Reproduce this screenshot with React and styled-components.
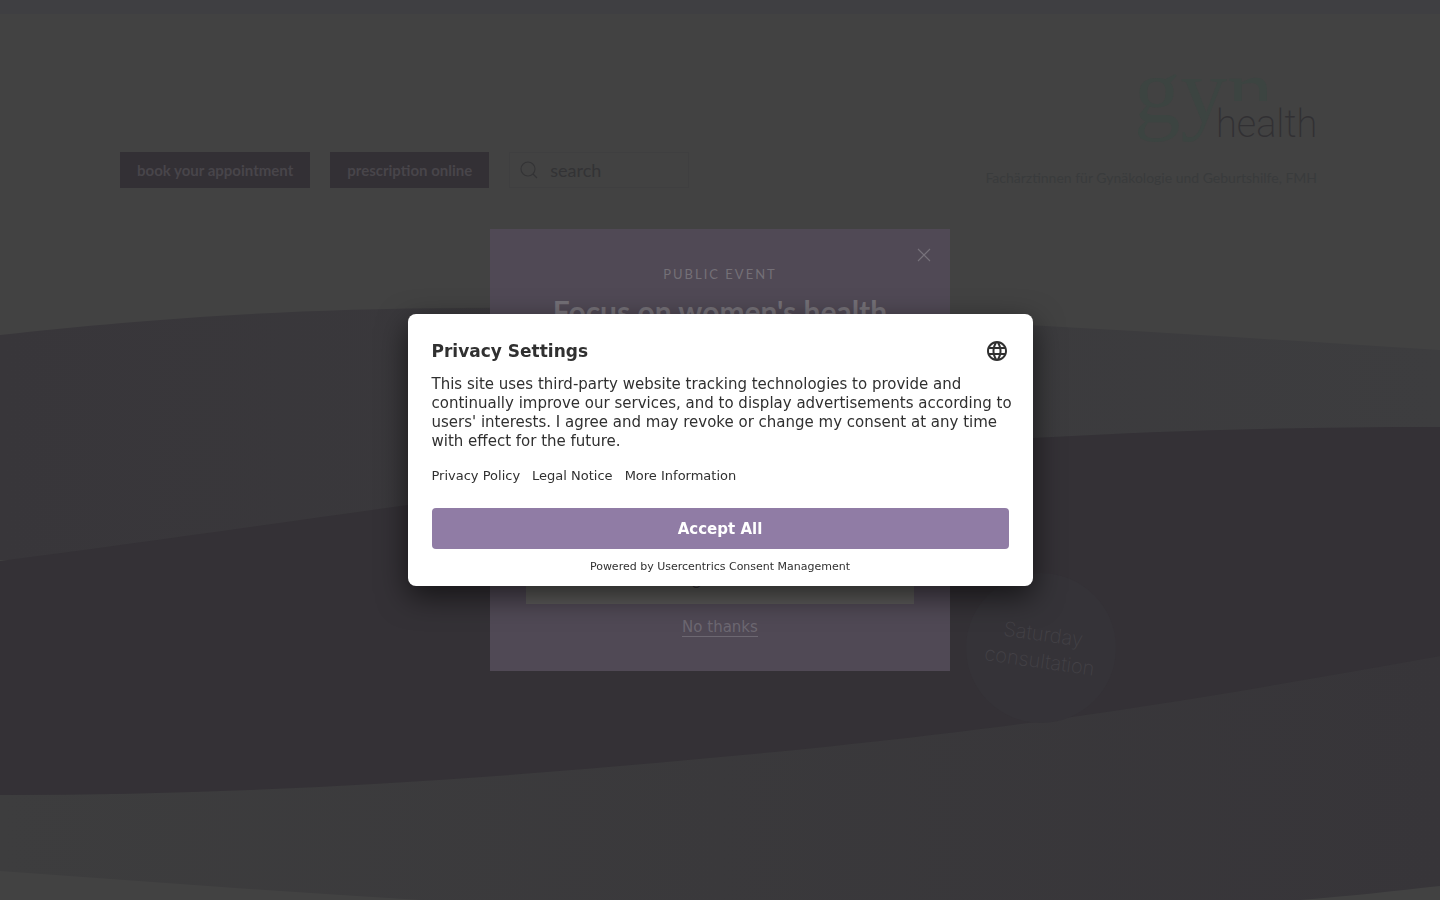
import React, { useState } from 'react';
import styled, { createGlobalStyle } from 'styled-components';
import { MdLanguage } from 'react-icons/md';

const GlobalStyle = createGlobalStyle`
    *{
        box-sizing:border-box;
    }
    body{
        margin:0;
        background:#424242;
        font-family:Lato, sans-serif;
    }
    button,input{
        font-family:inherit;
    }
`;
const Page = styled.div`
    display:flex;
    flex-direction:column;
    min-height:100vh;
    overflow:hidden;
`;
const TopStrip = styled.div`
    height:14px;
    background:#3f3f42;
`;
const Header = styled.header`
    display:flex;
    justify-content:space-between;
    align-items:flex-end;
    width:100%;
    max-width:1200px;
    height:174px;
    margin:0 auto;
`;
const Tools = styled.nav`
    display:flex;
    gap:20px;
`;
const ToolLink = styled.a`
    display:flex;
    align-items:center;
    height:36px;
    padding:0 17px;
    background:#333035;
    color:#48454a;
    font-size:15px;
    font-weight:700;
    text-decoration:none;
`;
const SearchBox = styled.label`
    display:flex;
    align-items:center;
    gap:10px;
    width:180px;
    height:36px;
    padding:0 10px;
    border:1px solid #3f3f40;
    svg{
        flex:none;
    }
    input{
        width:100%;
        min-width:0;
        padding:0;
        border:0;
        outline:0;
        background:transparent;
        color:#333335;
        font-size:18px;
    }
    input::placeholder{
        color:#333335;
        opacity:1;
    }
`;
const Brand = styled.a`
    display:flex;
    flex-direction:column;
    align-items:flex-end;
    gap:16px;
    margin-right:3px;
    color:#393b3c;
    text-decoration:none;
`;
const Tagline = styled.span`
    font-family:Lato, sans-serif;
    font-size:14px;
    line-height:20px;
`;
const Hero = styled.main`
    position:relative;
    flex:1;
    display:flex;
    min-height:712px;
`;
//背景波浪
const Waves = styled.svg`
    position:absolute;
    inset:0;
    width:100%;
    height:100%;
`;
const Badge = styled.a`
    position:absolute;
    top:385px;
    left:calc(50% + 246px);
    display:flex;
    align-items:center;
    justify-content:center;
    width:150px;
    height:150px;
    border-radius:50%;
    background:#353338;
    color:#434146;
    font-family:Inter, sans-serif;
    font-size:20px;
    font-weight:200;
    line-height:27px;
    text-align:center;
    text-decoration:none;
    span{
        transform:rotate(8deg);
    }
`;
const Overlay = styled.div`
    position:fixed;
    inset:0;
    display:flex;
    align-items:center;
    justify-content:center;
`;
const EventBox = styled.section`
    position:relative;
    display:flex;
    flex-direction:column;
    align-items:center;
    justify-content:space-between;
    width:460px;
    min-height:442px;
    padding:36px 36px 34px;
    background:#504955;
    color:#747077;
    text-align:center;
    small{
        display:block;
        font-size:13px;
        line-height:18px;
        letter-spacing:2px;
    }
    h2{
        margin:8px 0 0;
        font-size:30px;
        line-height:40px;
        font-weight:700;
    }
`;
const CloseButton = styled.button`
    position:absolute;
    top:16px;
    right:16px;
    display:flex;
    padding:0;
    border:0;
    background:transparent;
    color:#77727b;
`;
const EventActions = styled.div`
    display:flex;
    flex-direction:column;
    align-items:center;
    gap:14px;
    width:100%;
`;
const RegisterButton = styled.button`
    width:100%;
    height:52px;
    border:0;
    background:#5c5b5a;
    color:#333035;
    font-size:16px;
`;
const DeclineLink = styled.a`
    color:#6d6872;
    border-bottom:1px solid #6d6872;
    font-family:"DejaVu Sans", sans-serif;
    font-size:15px;
    line-height:18px;
    text-decoration:none;
`;
const Consent = styled.section`
    width:625px;
    padding:24px 24px 11px;
    border-radius:8px;
    background:#fff;
    box-shadow:0 10px 30px rgba(0,0,0,.6);
    color:#303030;
    font-family:"DejaVu Sans", sans-serif;
    font-size:15px;
    p{
        margin:11px -8px 0 0;
        line-height:19px;
    }
`;
const ConsentHead = styled.div`
    display:flex;
    align-items:center;
    justify-content:space-between;
    height:26px;
    h1{
        margin:0;
        font-size:17px;
    }
    button{
        display:flex;
        padding:0;
        border:0;
        background:transparent;
        color:#303030;
    }
`;
const LinkRow = styled.div`
    display:flex;
    gap:12px;
    margin-top:15px;
    a{
        color:inherit;
        font-size:13px;
        line-height:20px;
        text-decoration:none;
    }
`;
const AcceptButton = styled.button`
    width:100%;
    height:41px;
    margin-top:22px;
    border:0;
    border-radius:4px;
    background:#907ca5;
    color:#fff;
    font-size:15px;
    font-weight:700;
`;
const Powered = styled.div`
    margin-top:10px;
    font-size:11px;
    line-height:16px;
    text-align:center;
    a{
        color:inherit;
        text-decoration:none;
    }
`;

const Logo = () => (
    <svg width="184" height="120" viewBox="0 -44 184 120" aria-hidden="true">
        <text x="1" y="46" fill="#3c4441" fontFamily="Liberation Serif, serif" fontSize="93">gyn</text>
        <rect x="84" y="25" width="100" height="30" fill="#424242" />
        <text x="83" y="61" fill="#313033" fontFamily="Roboto, sans-serif" fontWeight="200" fontSize="38">health</text>
    </svg>
)

const App = () => {
    const [query, setQuery] = useState('')
    return (
        <>
            <GlobalStyle />
            <Page>
                <TopStrip />
                <Header>
                    <Tools>
                        <ToolLink href="#appointment">book your appointment</ToolLink>
                        <ToolLink href="#prescription">prescription online</ToolLink>
                        <SearchBox>
                            <svg width="20" height="20" viewBox="0 0 20 20" fill="none" stroke="#333335" strokeWidth="1.1">
                                <circle cx="8" cy="9" r="7" />
                                <path d="M13 14l4 4" />
                            </svg>
                            <input type="text" aria-label="search" placeholder="search" value={query} onChange={e => setQuery(e.target.value)} />
                        </SearchBox>
                    </Tools>
                    <Brand href="#home" aria-label="gyn health">
                        <Logo />
                        <Tagline>Fachärztinnen für Gynäkologie und Geburtshilfe, FMH</Tagline>
                    </Brand>
                </Header>
                <Hero>
                    <Waves viewBox="0 188 1440 712" preserveAspectRatio="none" aria-hidden="true">
                        <defs>
                            <linearGradient id="upper">
                                <stop offset="0" stopColor="#38363a" />
                                <stop offset="1" stopColor="#3d3d3f" />
                            </linearGradient>
                            <linearGradient id="lower">
                                <stop offset="0" stopColor="#3d3d3e" />
                                <stop offset="1" stopColor="#373539" />
                            </linearGradient>
                        </defs>
                        <path fill="url(#upper)" d="M0 335C130 321 270 309 460 308C700 304 1000 322 1440 350V560H0z" />
                        <path fill="url(#lower)" d="M0 600H1440V886C1395 891 1350 896 1300 900H420C280 892 140 881 0 871z" />
                        <path fill="#343136" d="M0 561C140 543 270 524 408 505C650 466 850 447 1033 438C1170 430 1300 427 1440 427V656C1220 695 1040 728 720 757C480 780 240 795 0 795z" />
                    </Waves>
                    <Badge href="#saturday"><span>Saturday<br />consultation</span></Badge>
                </Hero>
            </Page>
            <Overlay>
                <EventBox>
                    <CloseButton type="button" aria-label="Close">
                        <svg width="20" height="20" viewBox="0 0 20 20" fill="none" stroke="currentColor" strokeWidth="1.1">
                            <path d="M4 4l12 12M16 4L4 16" />
                        </svg>
                    </CloseButton>
                    <div>
                        <small>PUBLIC EVENT</small>
                        <h2>Focus on women's health</h2>
                    </div>
                    <EventActions>
                        <RegisterButton type="button">Register now</RegisterButton>
                        <DeclineLink href="#close">No thanks</DeclineLink>
                    </EventActions>
                </EventBox>
            </Overlay>
            <Overlay>
                <Consent role="dialog" aria-labelledby="consent-title">
                    <ConsentHead>
                        <h1 id="consent-title">Privacy Settings</h1>
                        <button type="button" aria-label="Language"><MdLanguage size={24} /></button>
                    </ConsentHead>
                    <p>This site uses third-party website tracking technologies to provide and continually improve our services, and to display advertisements according to users' interests. I agree and may revoke or change my consent at any time with effect for the future.</p>
                    <LinkRow>
                        <a href="#privacy">Privacy Policy</a>
                        <a href="#legal">Legal Notice</a>
                        <a href="#more">More Information</a>
                    </LinkRow>
                    <AcceptButton type="button">Accept All</AcceptButton>
                    <Powered>Powered by <a href="#usercentrics">Usercentrics Consent Management</a></Powered>
                </Consent>
            </Overlay>
        </>
    )
}

export default App;
